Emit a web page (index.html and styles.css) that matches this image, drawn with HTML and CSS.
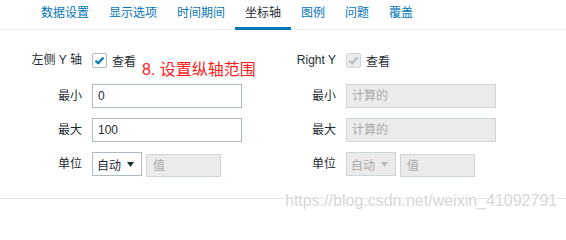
FILE: index.html
```html
<!DOCTYPE html>
<html lang="zh">
<head>
<meta charset="utf-8">
<title>坐标轴</title>
<link rel="stylesheet" href="styles.css">
</head>
<body>
<div class="page">
  <ul class="tabs">
    <li class="tab">数据设置</li>
    <li class="tab">显示选项</li>
    <li class="tab">时间期间</li>
    <li class="tab active">坐标轴</li>
    <li class="tab">图例</li>
    <li class="tab">问题</li>
    <li class="tab">覆盖</li>
  </ul>

  <div class="form">
    <div class="col">
      <div class="label first">左侧 Y 轴</div>
      <div class="ctrl first">
        <span class="cb"><svg width="13" height="13" viewBox="0 0 13 13"><path d="M2.5 6.8 L5.2 9.3 L10.5 3.6" fill="none" stroke="#0275b8" stroke-width="2.2"/></svg></span>
        <span class="cb-text">查看</span>
      </div>
      <div class="label">最小</div>
      <div class="ctrl"><input class="field" type="text" value="0"></div>
      <div class="label">最大</div>
      <div class="ctrl"><input class="field" type="text" value="100"></div>
      <div class="label">单位</div>
      <div class="ctrl">
        <div class="select"><span>自动</span><svg class="arrow" width="7" height="5" viewBox="0 0 7 5"><polygon points="0,0 7,0 3.5,5" fill="#1f2c33"/></svg></div>
        <input class="field small disabled" type="text" placeholder="值" disabled>
      </div>
    </div>

    <div class="col">
      <div class="label first">Right Y</div>
      <div class="ctrl first">
        <span class="cb cb-disabled"><svg width="13" height="13" viewBox="0 0 13 13"><path d="M2.5 6.8 L5.2 9.3 L10.5 3.6" fill="none" stroke="#b4bcc0" stroke-width="2.2"/></svg></span>
        <span class="cb-text">查看</span>
      </div>
      <div class="label">最小</div>
      <div class="ctrl"><input class="field disabled" type="text" placeholder="计算的" disabled></div>
      <div class="label">最大</div>
      <div class="ctrl"><input class="field disabled" type="text" placeholder="计算的" disabled></div>
      <div class="label">单位</div>
      <div class="ctrl">
        <div class="select select-disabled"><span>自动</span><svg class="arrow" width="7" height="5" viewBox="0 0 7 5"><polygon points="0,0 7,0 3.5,5" fill="#b4bcc0"/></svg></div>
        <input class="field small disabled" type="text" placeholder="值" disabled>
      </div>
    </div>
  </div>

  <div class="note">8. 设置纵轴范围</div>
  <div class="watermark">https://blog.csdn.net/weixin_41092791</div>
</div>
</body>
</html>
```

FILE: styles.css
```css
html, body {
  margin: 0;
  padding: 0;
  background: #ffffff;
}

body {
  font-family: "Liberation Sans", Arial, "Noto Sans CJK SC", sans-serif;
  font-size: 12px;
  color: #1f2c33;
}

.page {
  position: relative;
  width: 566px;
  height: 220px;
  overflow: hidden;
}

.tabs {
  list-style: none;
  margin: 0;
  padding: 0 0 0 31px;
  display: flex;
  border-bottom: 1px solid #ebeef0;
}

.tab {
  padding: 0 10px;
  line-height: 27px;
  border-bottom: 3px solid transparent;
  margin-bottom: -1px;
  color: #0275b8;
  white-space: nowrap;
}

.tab.active {
  color: #1f2c33;
  border-bottom-color: #0275b8;
}

.form {
  display: flex;
  padding: 20px 0 22px 0;
  border-bottom: 1px solid #e3e7ea;
}

.col {
  width: 254px;
  display: grid;
  grid-template-columns: 82px auto;
  grid-auto-rows: 24px;
  column-gap: 10px;
  row-gap: 10px;
}

.label {
  text-align: right;
  line-height: 24px;
  white-space: nowrap;
}

.label.first {
  line-height: 21px;
}

.ctrl {
  display: flex;
  align-items: flex-start;
}

.ctrl.first {
  align-items: center;
  height: 21px;
}

.cb {
  box-sizing: border-box;
  width: 15px;
  height: 15px;
  border: 1px solid #acbbc2;
  border-radius: 2px;
  background: #ffffff;
  display: flex;
  align-items: center;
  justify-content: center;
}

.cb-disabled {
  background: #ebebeb;
  border-color: #cfd6da;
}

.cb-text {
  margin-left: 5px;
}

.field {
  box-sizing: border-box;
  width: 150px;
  height: 24px;
  margin: 0;
  border: 1px solid #acbbc2;
  padding: 0 5px;
  font: inherit;
  color: #1f2c33;
  background: #ffffff;
  outline: none;
}

.field.disabled {
  background: #ebebeb;
  border-color: #cfd6da;
}

.field::placeholder {
  color: #a8a8a8;
  opacity: 1;
}

.field.small {
  width: 75px;
  height: 23px;
  margin-left: 4px;
  margin-top: 2px;
  padding: 0 6px;
}

.select {
  box-sizing: border-box;
  width: 50px;
  height: 24px;
  border: 1px solid #acbbc2;
  background: #ffffff;
  display: flex;
  align-items: center;
  justify-content: space-between;
  padding: 0 7px 0 4px;
  color: #1f2c33;
}

.select-disabled {
  background: #ebebeb;
  border-color: #cfd6da;
  color: #a8a8a8;
}

.arrow {
  display: block;
}

.note {
  position: absolute;
  left: 142px;
  top: 60px;
  font-size: 16px;
  line-height: 20px;
  color: #ff1a1a;
  white-space: nowrap;
}

.watermark {
  position: absolute;
  left: 285px;
  top: 192px;
  font-size: 16px;
  line-height: 18px;
  color: #d6d6d6;
  white-space: nowrap;
  text-shadow: 1px 0 0 #fff, -1px 0 0 #fff, 0 1px 0 #fff, 0 -1px 0 #fff;
}
```
